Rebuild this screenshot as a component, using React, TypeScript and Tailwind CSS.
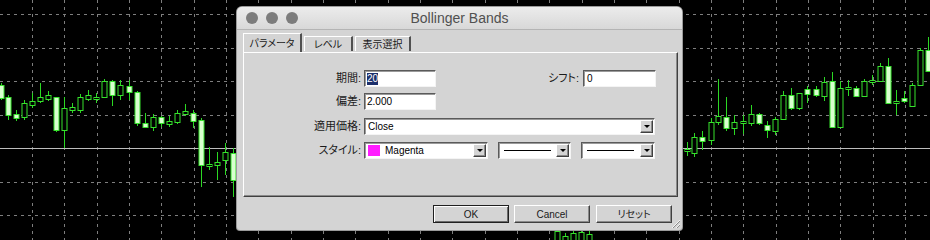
import React from "react"

// [x, bodyTop, bodyBottom, wickTop, wickBottom, filled]
type Candle = [number, number, number, number, number, boolean]

const candles: Candle[] = [
  [1, 85, 98, 83, 100, true],
  [8, 97, 115, 95, 120, true],
  [16, 114, 118, 110, 121, true],
  [24, 103, 117, 100, 120, false],
  [32, 101, 105, 93, 108, false],
  [40, 97, 101, 83, 103, false],
  [48, 95, 99, 91, 101, false],
  [56, 97, 130, 97, 132, true],
  [64, 108, 130, 97, 148, false],
  [72, 107, 110, 103, 113, false],
  [80, 97, 110, 94, 113, false],
  [88, 95, 99, 90, 101, false],
  [96, 97, 99, 93, 103, false],
  [104, 81, 97, 79, 98, false],
  [112, 81, 95, 80, 106, true],
  [120, 85, 95, 80, 100, false],
  [129, 86, 92, 80, 100, true],
  [137, 92, 123, 91, 126, true],
  [145, 123, 127, 113, 128, true],
  [153, 117, 127, 114, 131, false],
  [161, 117, 123, 116, 127, true],
  [169, 121, 124, 116, 127, false],
  [177, 113, 122, 110, 124, false],
  [185, 111, 114, 104, 116, false],
  [193, 113, 121, 110, 128, true],
  [201, 120, 165, 118, 187, true],
  [209, 164, 166, 147, 170, false],
  [217, 162, 165, 152, 180, false],
  [225, 152, 160, 143, 175, false],
  [233, 153, 180, 148, 197, true],
  [557, 231, 245, 229, 245, false],
  [565, 236, 245, 233, 245, false],
  [573, 233, 245, 230, 245, false],
  [581, 232, 245, 230, 245, false],
  [589, 234, 245, 231, 245, false],
  [687, 149, 151, 142, 156, false],
  [694, 137, 153, 133, 157, false],
  [702, 137, 141, 131, 150, true],
  [711, 122, 140, 118, 145, false],
  [718, 116, 122, 79, 125, false],
  [726, 117, 128, 97, 131, true],
  [734, 122, 128, 115, 135, false],
  [743, 121, 123, 115, 134, false],
  [751, 114, 123, 105, 126, false],
  [759, 114, 123, 113, 125, true],
  [767, 125, 130, 121, 138, true],
  [775, 119, 131, 117, 135, false],
  [783, 95, 119, 91, 120, false],
  [791, 95, 108, 88, 110, true],
  [799, 93, 108, 93, 110, false],
  [807, 89, 94, 86, 103, true],
  [816, 89, 95, 86, 97, true],
  [824, 82, 96, 77, 101, false],
  [832, 81, 127, 72, 127, true],
  [840, 88, 127, 81, 127, false],
  [848, 87, 89, 80, 96, false],
  [856, 88, 96, 86, 97, true],
  [864, 81, 96, 79, 97, false],
  [872, 80, 82, 75, 85, false],
  [880, 66, 81, 63, 82, false],
  [888, 66, 103, 58, 103, true],
  [896, 101, 103, 90, 115, false],
  [904, 98, 101, 91, 103, true],
  [912, 85, 106, 83, 107, false],
  [920, 50, 85, 48, 85, false],
  [928, 50, 71, 37, 72, true],
]

const Chart = () => {
  const vx = Array.from({ length: 29 }, (_, i) => Math.round(32 + 32.33 * i) + 0.5)
  const hy = Array.from({ length: 7 }, (_, i) => Math.round(14 + 33.5 * i) + 0.5)
  return (
    <svg className="absolute inset-0" width="930" height="240" viewBox="0 0 930 240">
      {vx.map((x) => (
        <line key={"v" + x} x1={x} y1={0} x2={x} y2={240} stroke="#7e7e7e" strokeDasharray="3 4" />
      ))}
      {hy.map((y, i) =>
        i === 4 ? (
          <line key={"h" + y} x1={0} y1={y} x2={930} y2={y} stroke="#bdbdbd" />
        ) : (
          <line key={"h" + y} x1={0} y1={y} x2={930} y2={y} stroke="#7e7e7e" strokeDasharray="3 4" />
        )
      )}
      {candles.map(([x, bt, bb, wt, wb, filled]) => (
        <g key={"c" + x}>
          <line x1={x + 0.5} y1={wt} x2={x + 0.5} y2={wb} stroke="#2bd823" />
          <rect
            x={x - 2}
            y={bt + 0.5}
            width={5}
            height={Math.max(bb - bt, 2)}
            fill={filled ? "#d9ffcf" : "#000"}
            stroke="#36e22c"
          />
        </g>
      ))}
    </svg>
  )
}

const DropBtn = () => (
  <div className="ml-auto mr-[1px] flex h-[13px] w-[13px] items-center justify-center border border-t-white border-l-white border-r-[#404040] border-b-[#404040] bg-[#d4d4d4] shadow-[inset_-1px_-1px_0_#8a8a8a]">
    <div className="h-0 w-0 border-x-[3px] border-t-[3px] border-x-transparent border-t-black" />
  </div>
)

const Field = ({ className, children }: { className: string; children?: React.ReactNode }) => (
  <div
    className={`flex h-[17px] items-center border border-t-[#5a5a5a] border-l-[#5a5a5a] border-b-[#f4f4f4] border-r-[#f4f4f4] bg-white shadow-[inset_1px_1px_0_#9a9a9a] ${className}`}>
    {children}
  </div>
)

const Label = ({ text, className = "" }: { text: string; className?: string }) => (
  <span className={`text-[11px] text-[#1a1a1a] [font-feature-settings:'palt'] ${className}`}>{text}</span>
)

const Tab = ({ text, active }: { text: string; active?: boolean }) => (
  <div
    className={`flex items-center justify-center border-t border-l border-t-white border-l-white border-r-2 border-r-[#505050] text-[10px] text-[#1a1a1a] [font-feature-settings:'palt'] ${
      active ? "relative z-10 -mb-[1px] h-[19px] w-[59px] bg-[#d4d4d4]" : "mt-[3px] h-[15px] bg-[#d4d4d4]"
    }`}>
    {text}
  </div>
)

const Button = ({ text, primary, className = "" }: { text: string; primary?: boolean; className?: string }) => (
  <div
    className={`flex h-[18px] w-[76px] items-center justify-center bg-[#d4d4d4] text-[10px] text-[#1a1a1a] [font-feature-settings:'palt'] ${
      primary
        ? "border border-[#202020] shadow-[inset_1px_1px_0_#fff,inset_-1px_-1px_0_#6a6a6a]"
        : "border border-t-white border-l-white border-r-[#404040] border-b-[#404040] shadow-[inset_-1px_-1px_0_#8a8a8a]"
    } ${className}`}>
    {text}
  </div>
)

const App = () => {
  return (
    <div
      className="relative h-[240px] w-[930px] overflow-hidden bg-black"
      style={{ fontFamily: '"Liberation Sans", "Noto Sans CJK JP", sans-serif' }}>
      <Chart />

      <div className="absolute left-[237px] top-[7px] flex h-[223px] w-[445px] flex-col overflow-hidden rounded-t-[5px] rounded-b-[3px] bg-[#d4d4d4] shadow-[0_0_0_1px_#9a9a9a]">
        {/* title bar */}
        <div className="relative flex h-[23px] items-center border-b border-[#b4b4b4] bg-gradient-to-b from-[#ececec] to-[#d8d8d8] px-[9px]">
          <div className="flex gap-[8px]">
            <div className="h-[12px] w-[12px] rounded-full bg-[#7c7c7c]" />
            <div className="h-[12px] w-[12px] rounded-full bg-[#7c7c7c]" />
            <div className="h-[12px] w-[12px] rounded-full bg-[#7c7c7c]" />
          </div>
          <span className="absolute inset-x-0 text-center text-[14px] text-[#505050]">Bollinger Bands</span>
        </div>

        <div className="flex flex-col pl-[6px] pt-[3px]">
          {/* tabs */}
          <div className="flex h-[19px] items-start gap-[2px]">
            <Tab text="パラメータ" active />
            <div className="w-[49px]">
              <Tab text="レベル" />
            </div>
            <div className="w-[56px]">
              <Tab text="表示選択" />
            </div>
          </div>

          {/* panel */}
          <div className="flex h-[145px] w-[435px] flex-col border border-t-white border-l-white border-r-[#404040] border-b-[#404040] pr-[21px] pt-[17px] shadow-[inset_-1px_-1px_0_#8a8a8a]">
            <div className="flex items-center">
              <Label text="期間:" className="w-[120px] pr-[3px] text-right" />
              <Field className="w-[72px] pl-[2px]">
                <span className="bg-[#1c2f6b] text-[10px] leading-[12px] text-white">20</span>
              </Field>
              <Label text="シフト:" className="ml-auto mr-[4px]" />
              <Field className="w-[73px] pl-[3px]">
                <span className="text-[10px] text-black">0</span>
              </Field>
            </div>

            <div className="mt-[6px] flex items-center">
              <Label text="偏差:" className="w-[120px] pr-[3px] text-right" />
              <Field className="w-[72px] pl-[2px]">
                <span className="text-[10px] text-black">2.000</span>
              </Field>
            </div>

            <div className="mt-[8px] flex items-center">
              <Label text="適用価格:" className="w-[120px] pr-[3px] text-right" />
              <Field className="w-[291px] pl-[3px]">
                <span className="text-[10px] text-black">Close</span>
                <DropBtn />
              </Field>
            </div>

            <div className="mt-[7px] flex items-center">
              <Label text="スタイル:" className="w-[120px] pr-[3px] text-right" />
              <Field className="w-[124px] pl-[3px]">
                <div className="h-[11px] w-[12px] bg-[#ff1cff]" />
                <span className="ml-[5px] text-[10px] text-black">Magenta</span>
                <DropBtn />
              </Field>
              <Field className="ml-[10px] w-[73px] pl-[5px]">
                <div className="h-[1px] w-[47px] bg-black" />
                <DropBtn />
              </Field>
              <Field className="ml-[10px] w-[74px] pl-[5px]">
                <div className="h-[1px] w-[47px] bg-black" />
                <DropBtn />
              </Field>
            </div>
          </div>

          {/* buttons */}
          <div className="mt-[8px] flex pr-[10px]">
            <Button text="OK" primary className="ml-auto" />
            <Button text="Cancel" className="ml-[5px]" />
            <Button text="リセット" className="ml-[6px]" />
          </div>
        </div>

        {/* resize grip */}
        <svg className="absolute bottom-[1px] right-[1px]" width="10" height="10" viewBox="0 0 10 10">
          <line x1="9" y1="1" x2="1" y2="9" stroke="#f4f4f4" />
          <line x1="9" y1="2" x2="2" y2="9" stroke="#8a8a8a" />
          <line x1="9" y1="5" x2="5" y2="9" stroke="#f4f4f4" />
          <line x1="9" y1="6" x2="6" y2="9" stroke="#8a8a8a" />
        </svg>
      </div>
    </div>
  )
}

export default App
